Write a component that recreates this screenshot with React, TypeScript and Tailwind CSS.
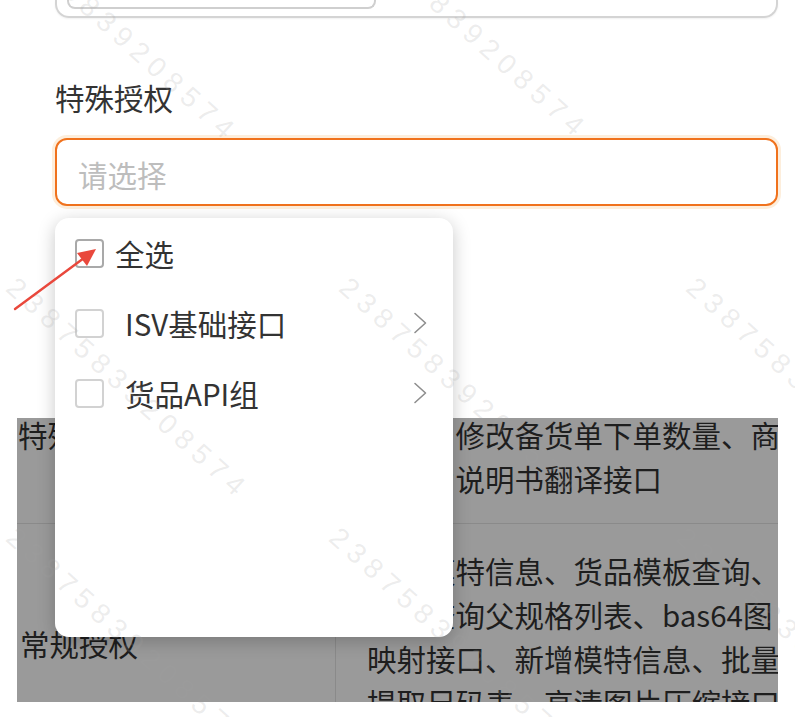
const font = "font-['Noto_Sans_CJK_SC','Noto_Sans',sans-serif]";

function Checkbox({ dark }: { dark?: boolean }) {
  return (
    <span
      className={
        dark
          ? "h-[29px] w-[29px] shrink-0 rounded-[4px] border-2 border-[#a9a9a9] bg-white"
          : "h-[29px] w-[29px] shrink-0 rounded-[4px] border-2 border-[#d2d2d2] bg-white"
      }
    />
  );
}

function GroupRow({ label }: { label: string }) {
  return (
    <div className="flex h-[70px] items-center pr-[26px] pl-[20px]">
      <Checkbox />
      <span className="ml-[21px] flex-1 text-[29.5px] leading-[40px] text-[#333]">
        {label}
      </span>
      <svg width="14" height="22" viewBox="0 0 14 22" className="text-[#8e8e8e]">
        <path
          d="M2 1.5 L12.5 11 L2 20.5"
          fill="none"
          stroke="currentColor"
          strokeWidth="1.6"
          strokeLinecap="round"
          strokeLinejoin="round"
        />
      </svg>
    </div>
  );
}

function Dropdown() {
  return (
    <div className="absolute top-full left-0 z-10 mt-[12px] h-[419px] w-[398px] rounded-[14px] bg-white shadow-[0_4px_18px_rgba(0,0,0,0.22)]">
      <div className="flex h-[70px] items-center pl-[20px]">
        <Checkbox dark />
        <span className="ml-[11px] text-[29.5px] leading-[40px] text-[#333]">
          全选
        </span>
      </div>
      <GroupRow label="ISV基础接口" />
      <GroupRow label="货品API组" />
    </div>
  );
}

function MaskedTable() {
  return (
    <div className="mx-[17px] mt-[212px] h-[284px] overflow-hidden bg-[#9a9a9a]">
      <div className="-mt-[6px] text-[29.5px] leading-[44px] whitespace-nowrap text-[#1e1e1e]">
        <div className="flex h-[112px] border-b border-[#8a8a8a]">
          <div className="w-[319px] shrink-0 border-r border-[#8a8a8a] pl-[1px]">
            特殊授权
          </div>
          <div className="pl-[31px]">
            <div>新增、修改备货单下单数量、商品</div>
            <div>品图片说明书翻译接口</div>
          </div>
        </div>
        <div className="flex">
          <div className="w-[319px] shrink-0 border-r border-[#8a8a8a] pt-[97px] pl-[3px]">
            常规授权
          </div>
          <div className="pt-[24px] pl-[31px]">
            <div>新增模特信息、货品模板查询、</div>
            <div>批量查询父规格列表、bas64图</div>
            <div>映射接口、新增模特信息、批量</div>
            <div>提取尺码表、高清图片压缩接口</div>
          </div>
        </div>
      </div>
    </div>
  );
}

function Arrow() {
  return (
    <svg
      className="pointer-events-none absolute top-0 left-0 z-30"
      width="120"
      height="330"
      viewBox="0 0 120 330"
    >
      <line
        x1="15"
        y1="309"
        x2="84"
        y2="258"
        stroke="#e9483c"
        strokeWidth="2.4"
        strokeLinecap="round"
      />
      <polygon points="96,249 77,253 87,266" fill="#e9483c" />
    </svg>
  );
}

function Watermarks() {
  const cls =
    "absolute origin-top-left rotate-[42deg] font-['Liberation_Sans',sans-serif] text-[28px] leading-none tracking-[7px] text-[#a0a0a0]/20 whitespace-nowrap";
  return (
    <div className="pointer-events-none absolute inset-0 z-20 overflow-hidden">
      <span className={`${cls} top-[-84px] left-[9px]`}>23875839208574</span>
      <span className={`${cls} top-[-87px] left-[359px]`}>23875839208574</span>
      <span className={`${cls} top-[273px] left-[20px]`}>23875839208574</span>
      <span className={`${cls} top-[273px] left-[353px]`}>23875839208574</span>
      <span className={`${cls} top-[273px] left-[700px]`}>23875839208574</span>
      <span className={`${cls} top-[523px] left-[20px]`}>23875839208574</span>
      <span className={`${cls} top-[523px] left-[343px]`}>23875839208574</span>
      <span className={`${cls} top-[523px] left-[690px]`}>23875839208574</span>
    </div>
  );
}

export default function App() {
  return (
    <div className={`relative h-[717px] w-[795px] overflow-hidden bg-white ${font}`}>
      <div className="pr-[17px] pl-[55px]">
        <div className="h-[18px] rounded-b-[14px] border-2 border-t-0 border-[#d4d4d4] shadow-[0_1px_2px_rgba(0,0,0,0.06)]">
          <div className="ml-[10px] h-[9px] w-[309px] rounded-b-[8px] border-2 border-t-0 border-[#cfcfcf]" />
        </div>

        <div className="mt-[59px] text-[29.5px] leading-[40px] text-[#333]">
          特殊授权
        </div>

        <div className="relative mt-[21px]">
          <div className="flex h-[68px] items-center rounded-[12px] border-2 border-[#f0721d] bg-white pt-[3px] pl-[21px] shadow-[0_0_0_3px_#fdeedc]">
            <span className="text-[29.5px] leading-[40px] text-[#bdbdbd]">
              请选择
            </span>
          </div>
          <Dropdown />
        </div>
      </div>

      <MaskedTable />
      <Arrow />
      <Watermarks />
    </div>
  );
}
